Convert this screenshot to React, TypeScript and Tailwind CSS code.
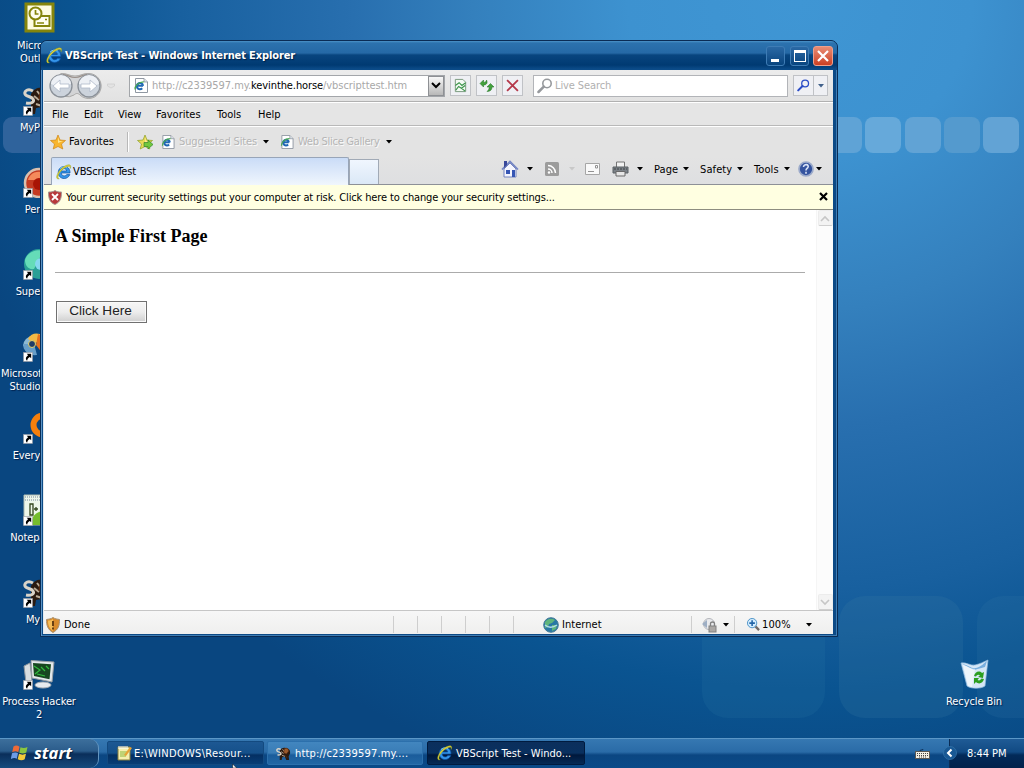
import React from "react";

type IconProps = { className?: string };

function IELogo({ className = "size-4" }: IconProps) {
  return (
    <svg viewBox="0 0 16 16" className={`shrink-0 ${className}`}>
      <path d="M12.900 9H5.200c.2 1.900 1.400 2.900 3.100 2.900 1.200 0 2-.5 2.500-1.300h3c-.9 2.400-3 3.900-5.600 3.900-3.500 0-5.900-2.400-5.900-6 0-3.500 2.500-6 5.900-6 3.600 0 5.900 2.600 5.800 6.500zM10.700 7c-.2-1.500-1.200-2.400-2.600-2.400S5.700 5.500 5.300 7z" fill="#3495ea" stroke="#0c4fa0" strokeWidth=".7" fillRule="evenodd" />
      <path d="M4 4.500C5.500 3 8.500 2.300 11 3.500" fill="none" stroke="#8ad3fb" strokeWidth=".9" />
      <path d="M3.300 14.800C.3 15.800-.2 12.800 2 9 4.400 4.700 9.200 1 12.600.8c2.400-.1 2.600 1.700 1.500 3.800.2-1.700-.2-2.400-1.700-2.200C9 2.900 4.600 6.800 2.900 10c-1.300 2.500-1.300 4.400.4 4.800z" fill="#e5cf3a" stroke="#7f9a22" strokeWidth=".4" />
    </svg>
  );
}

function PageIcon({ className = "w-[14px] h-[15px]" }: IconProps) {
  return (
    <svg viewBox="0 0 14 15" className={`shrink-0 ${className}`}>
      <path d="M1.500.5h8.500l3.500 3.500v10.500H1.500z" fill="#fff" stroke="#9098a2" />
      <path d="M10 .5V4h3.500" fill="#dde3ea" stroke="#7f8792" strokeWidth=".7" />
      <path d="M9 7.800H3.500M9 7.800a3.100 3.100 0 1 0-.8 2.400" fill="none" stroke="#1f67b4" strokeWidth="2.100" />
      <path d="M1 11.500c-.4-3.500 4-7.800 8.800-7.600" fill="none" stroke="#4aa84f" strokeWidth="1.200" />
    </svg>
  );
}

function Shortcut() {
  return (
    <svg viewBox="0 0 11 11" className="absolute left-0 bottom-0 size-[10px]">
      <rect x=".5" y=".5" width="10" height="10" fill="#fff" stroke="#8a8f98" strokeWidth=".6" />
      <path d="M4 2h5v5L7.500 5.500C5.500 6.500 5 7.500 4.500 9.500 2 8 3.500 5 5.700 3.700z" fill="#000" />
    </svg>
  );
}

function Caret({ className = "" }: IconProps) {
  return (
    <svg viewBox="0 0 6 4" className={`w-[6px] h-[4px] shrink-0 ${className}`}>
      <path d="M0 0h6L3 3.500z" fill="currentColor" />
    </svg>
  );
}

function Magnifier({ className = "" }: IconProps) {
  return (
    <svg viewBox="0 0 16 16" className={`shrink-0 ${className}`} fill="none" stroke="currentColor">
      <circle cx="10" cy="5.500" r="4.200" strokeWidth="1.600" />
      <path d="M6.800 8.700 1.500 14" strokeWidth="2.500" strokeLinecap="round" />
    </svg>
  );
}

function Horse({ className = "" }: IconProps) {
  return (
    <svg viewBox="0 0 32 32" className={className}>
      <path d="M8 10c3-6 8-7 12-6 8 0 11 6 10 12l-3 6 1 8h-6l-3-7-6 1-1 6H8z" fill="#2a1a10" />
      <path d="M10 7C5 4 1 7 2 10s6 2 8 5-2 5-7 4" fill="none" stroke="#d9d3c8" strokeWidth="3" />
      <path d="M11 12l5 4m-2-9 4 5m-5 8 6 2" stroke="#b9ab97" strokeWidth="2" fill="none" />
      <path d="M18 6c5-3 9 0 9 5l-5 6-6-3zM20 20l4 6" fill="#9b5a2c" stroke="#5c2f14" strokeWidth="1.500" />
    </svg>
  );
}

const desktopIcons: { top: string; label: React.ReactNode; shortcut: boolean; art: React.ReactNode }[] = [
  {
    top: "top-0",
    label: <>Microsoft<br />Outlook</>,
    shortcut: false,
    art: (
      <svg viewBox="0 0 32 32" className="size-8 -mt-px">
        <rect x="3" y="3" width="27" height="27" fill="#fdfbe0" stroke="#85850c" strokeWidth="3" />
        <rect x="11.500" y="15" width="15" height="10" fill="#fffef0" stroke="#85850c" strokeWidth="2" />
        <circle cx="12.500" cy="12.500" r="6" fill="#fffef0" stroke="#85850c" strokeWidth="2" />
        <path d="M12.500 9v4h3M14 22h7M22 18.500h2" stroke="#85850c" strokeWidth="1.700" fill="none" />
      </svg>
    ),
  },
  { top: "top-[82px]", label: "MyPaint", shortcut: true, art: <Horse className="size-8" /> },
  {
    top: "top-[164px]",
    label: "Pencil",
    shortcut: true,
    art: (
      <svg viewBox="0 0 32 32" className="size-8">
        <circle cx="16" cy="17" r="14" fill="#c43a22" stroke="#d8bfae" strokeWidth="2.500" />
        <path d="M5 14a11 11 0 0 1 16-7l-4 7z" fill="#f58a5b" />
        <circle cx="16" cy="18" r="6" fill="#a81405" />
      </svg>
    ),
  },
  {
    top: "top-[246px]",
    label: "Supermiu",
    shortcut: true,
    art: (
      <svg viewBox="0 0 32 32" className="size-8">
        <circle cx="16" cy="16" r="15" fill="#2a9f96" />
        <path d="M2 12C5 1 21-1 28 7c-7-2-13 2-14 8l-3 6C5 22 2 17 2 12z" fill="#65dcb8" />
        <circle cx="18" cy="16" r="6" fill="#86d8ef" />
      </svg>
    ),
  },
  {
    top: "top-[328px]",
    label: <>Microsoft Visual<br />Studio 2005</>,
    shortcut: true,
    art: (
      <svg viewBox="0 0 32 32" className="size-8">
        <path d="M0 16A10 10 0 0 1 10 6l1 8z" fill="#8bb8d3" />
        <path d="M5 9c3-6 10-7 15-3l-8 8z" fill="#f2ba45" />
        <path d="M15 4c9 3 11 12 5 20l-7-9z" fill="#e5711f" />
        <path d="M0 14c0 7 6 12 14 11l-3-11z" fill="#679ec8" />
        <circle cx="9" cy="14" r="3.500" fill="#203c67" stroke="#e6d36c" />
      </svg>
    ),
  },
  {
    top: "top-[410px]",
    label: "Everything",
    shortcut: true,
    art: (
      <svg viewBox="0 0 32 32" className="size-8">
        <circle cx="20" cy="13" r="9.500" fill="none" stroke="#f57f0c" strokeWidth="6" />
        <path d="m26 22 5 7" stroke="#f57f0c" strokeWidth="5" />
      </svg>
    ),
  },
  {
    top: "top-[492px]",
    label: "Notepad++",
    shortcut: true,
    art: (
      <svg viewBox="0 0 32 32" className="size-8">
        <path d="M1 1h29v30H1z" fill="#eef7ea" stroke="#acb9b1" />
        <path d="M9 31c-1-12 6-14 21-16v16z" fill="#76bd2e" />
        <path d="M2 3h27M2 6h27" stroke="#9eacb7" strokeWidth="1.500" strokeDasharray="1 1" />
        <path d="M7 10h3v11H7zM11 15h4M13 13v4" fill="none" stroke="#33461c" strokeWidth="1.300" />
      </svg>
    ),
  },
  { top: "top-[574px]", label: "My IE", shortcut: true, art: <Horse className="size-8" /> },
  {
    top: "top-[656px]",
    label: <>Process Hacker<br />2</>,
    shortcut: true,
    art: (
      <svg viewBox="0 0 32 32" className="size-8">
        <path d="m1 8 6-3 2 18-6 2z" fill="#d8dde0" stroke="#8e979e" />
        <path d="M8 2.500 31 4l-2 20L9 20z" fill="#e3e8eb" stroke="#969da3" />
        <path d="m10 5 18 1.200-1.500 15L11 18z" fill="#174720" />
        <path d="m11 8 6 4-5 4m6-7 4 4m-8 3 8 2m1-10 3 3" stroke="#31bb3e" strokeWidth="1.200" fill="none" />
        <ellipse cx="20" cy="27" rx="8" ry="3" fill="#e7ebef" stroke="#a5adb5" />
      </svg>
    ),
  },
];

function DesktopIcons() {
  return (
    <>
      {desktopIcons.map((item) => (
        <div key={item.top} className={`absolute left-[-16px] w-[110px] flex flex-col items-center ${item.top}`}>
          <div className="relative size-8 mt-[2px]">
            {item.art}
            {item.shortcut && <Shortcut />}
          </div>
          <div className="mt-[5px] text-white text-center leading-[13px] tracking-[-0.1px] whitespace-nowrap [text-shadow:1px_1px_1px_#00204c]">{item.label}</div>
        </div>
      ))}
      <div className="absolute left-[919px] top-[656px] w-[110px] flex flex-col items-center">
        <svg viewBox="0 0 32 32" className="size-8 mt-[2px]">
          <path d="M3 5c6-1 9 3 14 2s8-3 13-5l-3 26c-4 3-14 3-18 0z" fill="#d5e6f6" stroke="#8db8dd" strokeWidth=".7" />
          <path d="M4 6c7 1 9 5 14 4s8-5 11-7l-2 6-11 3z" fill="#78aede" />
          <path d="M5 7c5 1 7 4 12 4l-3 18-4-1z" fill="#fff" opacity=".6" />
          <path d="M16 18c1-4 5-6 8-3l2-1-1 6-5-1 2-1.500c-2-1.500-3-.5-4 1zM26 21c-1 4-5 6-8 3l-2 2 0-6 5 0-1.500 2c2 1 3 0 4-1.500z" fill="#2c9e20" />
        </svg>
        <div className="mt-[5px] text-white leading-[13px] tracking-[-0.1px] [text-shadow:1px_1px_1px_#00204c]">Recycle Bin</div>
      </div>
    </>
  );
}

function Wallpaper() {
  return (
    <>
      <div className="absolute left-[3px] top-[117px] w-[50px] h-[36px] rounded-[9px] bg-[#2f639c]" />
      <div className="absolute left-[826px] top-[117px] flex gap-[3px]">
        <div className="w-[36px] h-[36px] rounded-[8px] bg-[#5fa3d6]" />
        <div className="w-[36px] h-[36px] rounded-[8px] bg-[#66a9da]" />
        <div className="w-[36px] h-[36px] rounded-[8px] bg-[#61a3d5] ml-px" />
        <div className="w-[36px] h-[36px] rounded-[8px] bg-[#549ace]" />
        <div className="w-[36px] h-[36px] rounded-[8px] bg-[#62a3d5]" />
      </div>
      <div className="absolute left-[702px] top-[596px] w-[123px] h-[122px] rounded-[26px] bg-[#2a7ba5]/18" />
      <div className="absolute left-[839px] top-[596px] w-[124px] h-[122px] rounded-[26px] bg-[#3a7ba5]/22" />
      <div className="absolute left-[977px] top-[596px] w-[124px] h-[122px] rounded-[26px] bg-[#3a7ba5]/18" />
    </>
  );
}

function TitleBar() {
  return (
    <div className="h-[29px] shrink-0 flex items-center pl-[5px] pr-[4px] rounded-t-[6px] bg-[linear-gradient(#4c93c9_0px,#2c72ae_2px,#2569a6_12px,#08457f_14px,#003a72_24px,#0b4b88_28px)]">
      <IELogo className="size-[17px]" />
      <div className="ml-[2px] -mt-px text-white font-bold text-[11px] tracking-[-0.12px] whitespace-nowrap [text-shadow:1px_1px_1px_#002148]">VBScript Test - Windows Internet Explorer</div>
      <div className="ml-auto flex gap-[5px] items-center">
        <div className="w-[19px] h-[20px] rounded-[3px] border border-[#3e7cb5] bg-gradient-to-b from-[#2a69a5] to-[#08457f] flex items-end pl-[4px] pb-[3px]">
          <div className="w-[8px] h-[3px] bg-white" />
        </div>
        <div className="w-[19px] h-[20px] rounded-[3px] border border-[#3e7cb5] bg-gradient-to-b from-[#2a69a5] to-[#08457f] flex items-center justify-center">
          <div className="w-[12px] h-[12px] border border-t-[3px] border-white" />
        </div>
        <div className="w-[20px] h-[20px] -ml-px rounded-[3px] border border-[#efa08c] bg-gradient-to-b from-[#e88b73] to-[#cb3f22] flex items-center justify-center">
          <svg viewBox="0 0 12 12" className="size-[12px]"><path d="m1 1 10 10M11 1 1 11" stroke="#fff" strokeWidth="2.200" /></svg>
        </div>
      </div>
    </div>
  );
}

const toolButton = "h-[21px] border border-[#c0c2c6] bg-[#eff0f4] flex items-center justify-center shrink-0";

function NavigationBar() {
  return (
    <div className="h-[32px] shrink-0 flex items-center pl-[4px] border-b border-[#b1b1b1] bg-gradient-to-b from-[#ececec] to-[#e2e2e2]">
      <svg viewBox="0 0 68 28" className="w-[68px] h-[28px] shrink-0">
        <path d="M13 1.500C19 1 21 4 27 4s8-3 14-2.500a12.500 12.500 0 1 1-9 21.500c-2-2-4-2-6 0A12.500 12.500 0 1 1 13 1.500z" fill="#d3d4d6" stroke="#aaa9a8" />
        <path d="M15 2.500c4 0 7 3 12 3s8-3 12-3" fill="none" stroke="#9a908a" strokeWidth="1.200" />
        <circle cx="13" cy="14" r="11" fill="#ccd3dc" stroke="#8a9098" strokeWidth="1.300" />
        <circle cx="41" cy="14" r="11" fill="#ccd3dc" stroke="#8a9098" strokeWidth="1.300" />
        <path d="M3 12a10 9 0 0 1 20 0c-5 2-15 2-20 0zM31 12a10 9 0 0 1 20 0c-5 2-15 2-20 0z" fill="#edf0f5" />
        <path d="m5 14 7-6v4h9v4h-9v4zM49 14l-7-6v4h-9v4h9v4z" fill="#fff" stroke="#aeb9c9" strokeWidth=".8" />
        <path d="M59.500 12h7v2l-3.500 2-3.500-2z" fill="#e3e3e3" stroke="#c8c8c8" strokeWidth=".6" />
      </svg>
      <div className="ml-[13px] w-[316px] h-[22px] border border-[#a3a6aa] bg-white flex items-center pl-[4px] shrink-0">
        <PageIcon />
        <div className="ml-[4px] text-[#a8a8a8] tracking-[-0.05px] whitespace-nowrap">http://c2339597.my.<span className="text-black tracking-[-0.1px]">kevinthe.horse</span>/vbscripttest.htm</div>
        <div className="ml-auto w-[16px] h-[20px] border border-[#8e9094] bg-gradient-to-b from-[#f8f8f8] to-[#b8b8b8] flex items-center justify-center">
          <svg viewBox="0 0 10 7" className="w-[10px] h-[7px]"><path d="m1 1 4 4 4-4" fill="none" stroke="#000" strokeWidth="2" /></svg>
        </div>
      </div>
      <div className={`${toolButton} ml-[5px] w-[21px]`}>
        <svg viewBox="0 0 16 16" className="size-[15px]" fill="none"><path d="M2.500 1.500h8l3 3v10h-11z" fill="#f4faf4" stroke="#75967a" /><path d="m2.500 8 4-3 3 3 4-3M3 13l3-4 3 2 4-3M9 11l4 3" stroke="#3c954b" strokeWidth="1.200" /></svg>
      </div>
      <div className={`${toolButton} ml-[5px] w-[21px]`}>
        <svg viewBox="0 0 16 16" className="size-[16px]" fill="#43a13c" stroke="#1f6c23" strokeWidth=".5"><path d="M1 5.500 4.500 2v2.300c2 0 3-.8 3-2.300 1.500 3 0 5-3 5v2z" /><path d="M15 9 11.500 5.500 8 9h2.200c0 2-.7 3-2.200 4.500 3 0 5-1.500 5-4.500z" /></svg>
      </div>
      <div className={`${toolButton} ml-[5px] w-[21px]`}>
        <svg viewBox="0 0 12 12" className="size-[13px]"><path d="m1 1 10 10M11 1 1 11" stroke="#b5384a" strokeWidth="1.700" /></svg>
      </div>
      <div className="ml-[10px] w-[255px] h-[22px] border border-[#b2b4b8] bg-white flex items-center pl-[3px] shrink-0">
        <Magnifier className="size-[16px] text-[#96999d]" />
        <span className="ml-[2px] text-[#b0b0b0] tracking-[-0.1px]">Live Search</span>
      </div>
      <div className={`${toolButton} ml-[5px] w-[21px]`}><Magnifier className="size-[13px] text-[#2b4cc6]" /></div>
      <div className={`${toolButton} w-[14px] border-l-0`}><Caret className="text-[#40608a]" /></div>
    </div>
  );
}

function MenuBar() {
  return (
    <div className="h-[24px] shrink-0 flex items-center pl-[8px] border-t border-t-white border-b border-b-[#b9b9b9] bg-[#e5e5e5]">
      <span className="w-[32px]">File</span>
      <span className="w-[34px]">Edit</span>
      <span className="w-[38px]">View</span>
      <span className="w-[61px]">Favorites</span>
      <span className="w-[41px]">Tools</span>
      <span>Help</span>
    </div>
  );
}

function Star({ plus = false }: { plus?: boolean }) {
  return (
    <svg viewBox="0 0 16 16" className="size-4 shrink-0">
      <path d="m8 1 2 5 5.500.5-4 3.500 1.300 5L8 12.500 3.200 15l1.300-5-4-3.500L6 6z" fill={plus ? "#e8db55" : "#f9b52c"} stroke={plus ? "#8b9d21" : "#cf8516"} strokeWidth=".7" />
      <path d="m8 3 1.300 4H13L8 9z" fill="#fee68c" />
      {plus && <path d="M7 8.500h4V6l5 4.500-5 4.500v-2.500H7z" fill="#71c83c" stroke="#32852d" strokeWidth=".7" />}
    </svg>
  );
}

function FavoritesBar() {
  return (
    <div className="h-[31px] shrink-0 flex items-center pl-[6px] pb-px border-t border-white bg-[#e3e3e3]">
      <Star />
      <span className="ml-[3px] w-[58px] tracking-[0.05px]">Favorites</span>
      <div className="w-px h-[20px] bg-[#b8b8b8]" />
      <div className="w-px h-[20px] bg-white mr-[8px]" />
      <Star plus />
      <PageIcon className="ml-[8px] w-[14px] h-[14px]" />
      <span className="ml-[4px] w-[84px] tracking-[-0.12px] whitespace-nowrap text-[#b5b5b5] [text-shadow:1px_1px_0_#fafafa]">Suggested Sites</span>
      <Caret />
      <PageIcon className="ml-[11px] w-[14px] h-[14px]" />
      <span className="ml-[4px] w-[88px] tracking-[-0.28px] whitespace-nowrap text-[#b5b5b5] [text-shadow:1px_1px_0_#fafafa]">Web Slice Gallery</span>
      <Caret />
    </div>
  );
}

function TabRow() {
  return (
    <div className="h-[28px] shrink-0 flex border-b border-[#8d9097] bg-gradient-to-b from-[#e3e3e3] to-[#dedfe1]">
      <div className="ml-[7px] w-[298px] h-[28px] -mb-px border border-b-0 border-[#98a5b8] bg-gradient-to-b from-[#cadcf7] to-[#f0f6fd] rounded-t-[2px] flex items-center pl-[4px] shrink-0">
        <IELogo className="size-[16px]" />
        <span className="ml-[1px] tracking-[-0.12px]">VBScript Test</span>
      </div>
      <div className="w-[30px] h-[25px] mt-[2px] border border-b-0 border-[#a1aab6] bg-gradient-to-b from-[#f0f6fe] to-[#dbe8f7] shrink-0" />
      <div className="ml-[122px] flex items-center pb-[3px] grow">
        <svg viewBox="0 0 18 18" className="size-[18px]"><path d="M3 9v8h12V9L9 3z" fill="#f4f5fe" stroke="#7484bd" /><path d="m1 9.500 8-8 8 8" fill="none" stroke="#7385c4" strokeWidth="1.700" /><path d="M3 1h3v4l-3 3z" fill="#39489a" /><path d="M11 10h3v7h-3zM5 10h4v4H5z" fill="#3656b4" /></svg>
        <Caret className="ml-[8px]" />
        <svg viewBox="0 0 14 14" className="ml-[12px] size-[14px]"><rect width="14" height="14" rx="1.500" fill="#9c9c9c" /><path d="M3 7a4 4 0 0 1 4 4M3 3.500A7.500 7.500 0 0 1 10.500 11" fill="none" stroke="#fff" strokeWidth="1.500" /><circle cx="4" cy="10.500" r="1.200" fill="#fff" /></svg>
        <Caret className="ml-[10px] text-[#c8c8c8]" />
        <svg viewBox="0 0 15 12" className="ml-[10px] w-[15px] h-[12px]"><path d="M.5 .5h14v11H.5z" fill="#f9f9f9" stroke="#a6a6a6" /><path d="M10.500 2.500h2V5h-2zM3 8.500h6" stroke="#929292" fill="none" /></svg>
        <svg viewBox="0 0 17 16" className="ml-[12px] w-[17px] h-[16px]"><path d="M4.500 1h8v6h-8z" fill="#f2f2f2" stroke="#747474" /><path d="M1 6h15v6H1z" fill="#7b8187" stroke="#5b6065" /><path d="M4 10.500h9v4.500H4z" fill="#e6e6e6" stroke="#696969" /><path d="M2 8h13" stroke="#3f4347" strokeDasharray="2 1" /></svg>
        <Caret className="ml-[8px]" />
        <span className="ml-[11px] w-[29px] tracking-[0.1px]">Page</span><Caret />
        <span className="ml-[11px] w-[37px] tracking-[0.1px]">Safety</span><Caret />
        <span className="ml-[11px] w-[30px] tracking-[0.1px]">Tools</span><Caret />
        <svg viewBox="0 0 16 16" className="ml-[8px] size-[16px]"><circle cx="8" cy="8" r="7" fill="#35549f" stroke="#9baaca" strokeWidth="1.700" /><path d="M5.500 6c.3-3.500 6-2.800 4.500.2C9.500 7.500 8 7.500 8 9.500m0 1.200v2" fill="none" stroke="#d9e3f7" strokeWidth="1.600" /></svg>
        <Caret className="ml-[2px]" />
      </div>
    </div>
  );
}

function InfoBar() {
  return (
    <div className="h-[25px] shrink-0 flex items-center pl-[4px] pr-[5px] pt-px bg-[#ffffe1] border-b border-[#8d8d80]">
      <svg viewBox="0 0 14 15" className="w-[14px] h-[15px] shrink-0"><path d="M7 .5C9 2 11 2 13.500 2c0 6-1 10-6.500 12.500C1.500 12.500 .5 8 .5 2 3 2 5 2 7 .5z" fill="#b8393a" stroke="#a59793" /><path d="m4 4 6 6m0-6-6 6" stroke="#fff" strokeWidth="1.800" /></svg>
      <span className="ml-[4px] whitespace-nowrap tracking-[-0.135px]">Your current security settings put your computer at risk. Click here to change your security settings...</span>
      <svg viewBox="0 0 9 9" className="ml-auto -mt-[2px] size-[9px]"><path d="m1 1 7 7m0-7L1 8" stroke="#000" strokeWidth="2.200" /></svg>
    </div>
  );
}

function ScrollButton({ down = false }: { down?: boolean }) {
  return (
    <div className="w-[15px] h-[16px] mx-auto rounded-[2px] border border-[#ececec] border-b-[#cfcfcf] bg-[#f3f3f3] flex items-center justify-center">
      <svg viewBox="0 0 10 7" className="w-[10px] h-[7px]"><path d={down ? "m1 1 4 4 4-4" : "m1 6 4-4 4 4"} fill="none" stroke="#c6c6c6" strokeWidth="1.600" /></svg>
    </div>
  );
}

function Page() {
  return (
    <div className="grow flex bg-white min-h-0">
      <div className="grow pl-[11px] pr-[11px]">
        <h3 className="mt-[16px] h-[20px] leading-[20px] font-bold text-[18px] text-black whitespace-nowrap font-['Liberation_Serif',serif]">A Simple First Page</h3>
        <hr className="mt-[26px] border-t border-[#ababab]" />
        <button className="mt-[28px] ml-px w-[91px] h-[22px] pr-[2px] border border-[#707070] bg-gradient-to-b from-[#f6f6f6] via-[#ededed] to-[#cfcfcf] shadow-[inset_0_0_0_1px_#fafafa] font-['Liberation_Sans',sans-serif] text-[13.600px] leading-[18px] pb-[2px] text-[#222]">Click Here</button>
      </div>
      <div className="w-[17px] bg-[#fcfcfc] border-l border-[#f5f5f5] flex flex-col justify-between">
        <ScrollButton />
        <ScrollButton down />
      </div>
    </div>
  );
}

function StatusBar() {
  return (
    <div className="h-[24px] shrink-0 flex items-center pl-[2px] pt-[4px] border-t border-[#c6c6c6] bg-gradient-to-b from-[#f7f7f7] to-[#efefee]">
      <svg viewBox="0 0 14 16" className="w-[14px] h-[16px] shrink-0"><path d="M7 .5C9 2 11 2 13.500 2.500c0 6-1 10-6.500 13C1.500 12.500.5 8 .5 2.500 3 2 5 2 7 .5z" fill="#d98b2b" stroke="#a8906f" /><path d="M2 3.500c2 0 3 0 5-1.500v12C4 12 2 9 2 3.500z" fill="#f6bd58" /><path d="M7 4v5m0 1.500v2" stroke="#684013" strokeWidth="2" /></svg>
      <span className="ml-[4px] w-[329px]">Done</span>
      {[0, 1, 2, 3, 4, 5].map((n) => (
        <div key={n} className="w-[24px] h-[17px] border-l border-[#cecece]" />
      ))}
      <svg viewBox="0 0 16 16" className="ml-[6px] size-[16px] shrink-0"><circle cx="8" cy="8" r="7.300" fill="#2878a5" stroke="#447a97" /><path d="M2 5c3-4 7-4 10-2l-3 3-3 1-1 3-3 1zM9 8l5 0-1 4-4 2z" fill="#60b57c" /><path d="M2 8c3 3 8 3 12 0" stroke="#b3dce9" strokeWidth="1.500" fill="none" /></svg>
      <span className="ml-[3px] w-[129px] tracking-[0.05px]">Internet</span>
      <div className="w-[10px] h-[17px] border-l border-[#cecece]" />
      <svg viewBox="0 0 16 16" className="size-[16px] shrink-0"><circle cx="8" cy="7" r="5.500" fill="#e9eaed" stroke="#b3b5bb" /><path d="m1 7 5-4v8z" fill="#9daec4" /><rect x="8" y="9" width="7" height="6" fill="#aba8a5" stroke="#818181" /><path d="M9.500 9V6.500c0-2 4-2 4 0V9" fill="none" stroke="#818181" strokeWidth="1.300" /></svg>
      <Caret className="ml-[6px]" />
      <div className="ml-[5px] w-[13px] h-[17px] border-l border-[#cecece]" />
      <svg viewBox="0 0 14 14" className="size-[13px] shrink-0"><path d="m8 8 5 5" stroke="#716a67" strokeWidth="2.500" /><circle cx="5.500" cy="5.500" r="5" fill="#d3edff" stroke="#468fc5" /><path d="M5.500 2.500v6m-3-3h6" stroke="#2265a8" strokeWidth="1.700" /></svg>
      <span className="ml-[2px] w-[44px] tracking-[0.1px]">100%</span>
      <Caret />
    </div>
  );
}

function BrowserWindow() {
  return (
    <div className="absolute left-[40px] top-[40px] w-[798px] h-[597px] rounded-t-[7px] border border-[#0a2c55] bg-[#0c4a86] shadow-[inset_1px_0_0_#5d95c6,inset_-1px_-1px_0_#3f7db3] flex flex-col">
      <TitleBar />
      <div className="ml-[2px] mr-[4px] mb-[2px] grow flex flex-col min-h-0 border-l border-[#e4e9ee] bg-[#e6e6e6]">
        <NavigationBar />
        <MenuBar />
        <FavoritesBar />
        <TabRow />
        <InfoBar />
        <Page />
        <StatusBar />
      </div>
    </div>
  );
}

function Taskbar() {
  return (
    <div className="relative h-[30px] shrink-0 flex items-stretch text-white border-t border-[#5b97c7] bg-[linear-gradient(#3678b2_0px,#2a6ba7_13px,#0b4682_16px,#0a4a88_29px)]">
      <div className="w-[99px] flex items-center pb-[2px] pl-[11px] rounded-r-[9px] border-r border-[#6294bf] bg-[linear-gradient(#3d6f9c_0px,#2b5c8b_12px,#0a2e5a_15px,#164b7d_29px)]">
        <svg viewBox="0 0 18 18" className="w-[18px] h-[18px]"><path d="M2.500 2.500C5 1 6.500 1.500 8.500 2.800L7.300 8.300C5.500 7 3.500 7 1.200 8.200z" fill="#ee6a36" /><path d="M9.500 3.300c2.500 1.200 4.500 1 7-.3L15.300 8.500c-2.500 1.300-4.500 1.200-7 .2z" fill="#8ac640" /><path d="M1 9.300c2.500-1.200 4-1.200 6-.1L5.800 14.800C4 13.500 2.200 13.800-.2 15z" fill="#6d9ce5" /><path d="M8 9.800c2.500 1.100 4.500 1.100 7 0l-1.300 5.500c-2.300 1.300-4.500 1.200-7-.1z" fill="#f4cb3a" /></svg>
        <span className="ml-[5px] font-bold italic text-[16.500px] leading-[20px] font-['Open_Sans',sans-serif] [text-shadow:1px_1px_1px_#001b3d]">start</span>
      </div>
      <div className="ml-[8px] mt-[2px] h-[24px] w-[157px] flex items-center pl-[8px] rounded-[2px] border border-[#134a80] bg-[linear-gradient(#1d5893_0px,#15508a_11px,#042f62_13px,#083f78_23px)]">
        <svg viewBox="0 0 16 16" className="size-[16px] shrink-0"><path d="M2 2h12v13H2z" fill="#f5efae" stroke="#847b3d" /><path d="M3 1v3m2-3v3m2-3v3m2-3v3m2-3v3" stroke="#fff" /><path d="M4 7h7M4 9h7M4 11h6" stroke="#89b63c" /><path d="m8 10 6-8 2 1-6 8z" fill="#e6a336" /></svg>
        <span className="ml-[2px] whitespace-nowrap tracking-[0.32px]">E:\WINDOWS\Resour...</span>
      </div>
      <div className="ml-[3px] mt-[2px] h-[24px] w-[156px] flex items-center pl-[8px] rounded-[2px] border border-[#2c70ac] bg-[linear-gradient(#4286bf_0px,#397cb6_11px,#1a5c9b_13px,#2368a5_23px)]">
        <Horse className="size-[15px] shrink-0" />
        <span className="ml-[4px] whitespace-nowrap tracking-[0.17px]">http://c2339597.my....</span>
      </div>
      <div className="ml-[4px] mt-[2px] h-[24px] w-[158px] flex items-center pl-[9px] rounded-[2px] border border-[#001b3f] bg-[linear-gradient(#0b2f5c_0px,#09305f_11px,#00183c_13px,#062c58_23px)]">
        <IELogo className="size-[16px]" />
        <span className="ml-[3px] whitespace-nowrap tracking-[0.03px]">VBScript Test - Windo...</span>
      </div>
      <div className="ml-auto flex items-center pr-[19px]">
        <svg viewBox="0 0 15 10" className="w-[15px] h-[10px]"><path d="M5 2c0-2 3 0 3-2" stroke="#082a50" fill="none" /><rect x=".5" y="2.500" width="14" height="7" fill="#f3efe4" stroke="#5c5954" /><path d="M2 4.500h11M2 6.500h11M4 8h7" stroke="#474544" strokeDasharray="1 1" /></svg>
      </div>
      <div className="w-[75px] flex items-center pb-px border-l border-[#0a2c55] bg-[linear-gradient(#1f5b96_0px,#114a83_13px,#022a59_16px,#02234c_29px)]">
        <svg viewBox="0 0 14 14" className="-ml-[7px] size-[14px]"><circle cx="7" cy="7" r="6.500" fill="#185894" stroke="#3a78ae" strokeWidth=".7" /><path d="M8.500 3.500 5 7l3.500 3.500" fill="none" stroke="#fff" strokeWidth="2" /></svg>
        <span className="ml-[10px] whitespace-nowrap tracking-[-0.05px]">8:44 PM</span>
      </div>
      <svg viewBox="0 0 8 5" className="absolute left-[231px] bottom-0 w-[8px] h-[4px]"><path d="M1 0v5h5z" fill="#fff" stroke="#000" strokeWidth=".6" /></svg>
    </div>
  );
}

export default function App() {
  return (
    <div className="w-[1024px] h-[768px] overflow-hidden flex flex-col text-[11px] leading-[13px] text-black font-['DejaVu_Sans_Condensed','DejaVu_Sans',sans-serif]">
      <div className="relative grow overflow-hidden bg-[radial-gradient(ellipse_860px_820px_at_800px_0px,#3f96d4_0%,#3d92d0_20%,#3480bd_38%,#286faf_52%,#18609f_72%,#0a5491_84%,#094680_100%)]">
        <Wallpaper />
        <DesktopIcons />
        <BrowserWindow />
      </div>
      <Taskbar />
    </div>
  );
}
